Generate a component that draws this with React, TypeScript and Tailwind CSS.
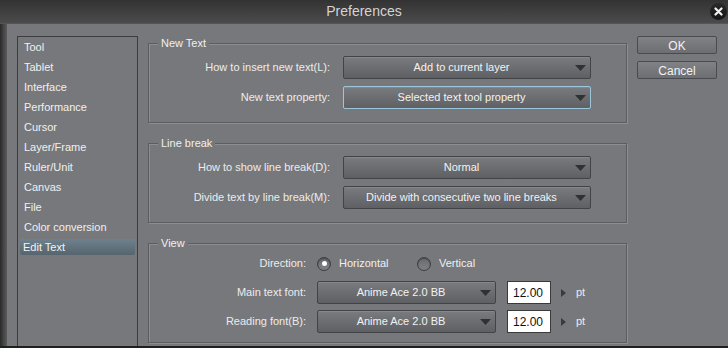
import React from "react";

const categories = [
  "Tool",
  "Tablet",
  "Interface",
  "Performance",
  "Cursor",
  "Layer/Frame",
  "Ruler/Unit",
  "Canvas",
  "File",
  "Color conversion",
  "Edit Text",
];

function Dropdown({ value, width, focused }: { value: string; width: string; focused?: boolean }) {
  return (
    <div
      className={`${width} h-[23px] flex items-center rounded-[2px] border ${
        focused ? "border-[#9cc6dc]" : "border-[#424346]"
      } bg-gradient-to-b from-[#7a7b7e] to-[#5f6063] shadow-[inset_0_1px_0_#86878a]`}
    >
      <span className="flex-1 text-center text-[#f2f2f2] pl-[4px]">{value}</span>
      <svg width="11" height="6" viewBox="0 0 11 6" className="mr-[4px]">
        <path d="M0 0 H11 L5.5 6 Z" fill="#303133" />
      </svg>
    </div>
  );
}

function Group({ title, children, className }: { title: string; children: React.ReactNode; className?: string }) {
  return (
    <div
      className={`relative border border-[#5c5d60] shadow-[inset_1px_1px_0_#8d8e91,1px_1px_0_#8d8e91] ${className ?? ""}`}
    >
      <span className="absolute -top-[8px] left-[9px] px-[3px] bg-[#77787b] text-[#f0f0f0] leading-[14px]">
        {title}
      </span>
      {children}
    </div>
  );
}

function Radio({ checked, label, className }: { checked?: boolean; label: string; className?: string }) {
  return (
    <div className={`flex items-center gap-[8px] ${className ?? ""}`}>
      <div className="w-[14px] h-[14px] rounded-full border border-[#3c3d40] bg-gradient-to-b from-[#6a6b6e] to-[#7f8083] flex items-center justify-center shadow-[inset_0_1px_1px_#4a4b4e]">
        {checked && <div className="w-[5px] h-[5px] rounded-full bg-white" />}
      </div>
      <span className="text-[#f0f0f0]">{label}</span>
    </div>
  );
}

function SizeField() {
  return (
    <>
      <div className="ml-[11px] w-[44px] h-[23px] bg-white border border-[#3a3a3a] flex items-center pl-[5px] text-[#111] text-[12px]">
        12.00
      </div>
      <svg width="5" height="8" viewBox="0 0 5 8" className="ml-[10px]">
        <path d="M0 0 L5 4 L0 8 Z" fill="#3a3b3e" />
      </svg>
      <span className="ml-[10px]">pt</span>
    </>
  );
}

export default function App() {
  return (
    <div
      className="w-[728px] h-[348px] overflow-hidden flex flex-col bg-[#77787b] text-[11px]"
      style={{ fontFamily: '"Liberation Sans", Arial, sans-serif' }}
    >
      {/* TITLE BAR */}
      <div className="h-[24px] flex items-center bg-gradient-to-b from-[#333333] to-[#4b4b4b] border-b border-[#555]">
        <div className="w-[32px]" />
        <div className="flex-1 text-center text-[#d4d4d4] text-[14px]">Preferences</div>
        <div className="w-[32px] flex justify-end pr-[1px]">
          <div className="w-[17px] h-[17px] rounded-full bg-gradient-to-b from-[#2a2a2a] to-[#151515] flex items-center justify-center">
            <svg width="9" height="9" viewBox="0 0 9 9">
              <path d="M1.5 1.5 L7.5 7.5 M7.5 1.5 L1.5 7.5" stroke="#f2f2f2" strokeWidth="2.2" strokeLinecap="round" />
            </svg>
          </div>
        </div>
      </div>

      {/* BODY */}
      <div className="flex-1 flex min-h-0">
        <div className="w-[7px] bg-gradient-to-r from-[#2a2a2a] via-[#444] to-[#5b5b5b]" />

        {/* CATEGORY LIST */}
        <div className="ml-[10px] mt-[12px] w-[121px] border-t border-x border-[#3c3d40] flex flex-col">
          {categories.map((c) => (
            <div key={c} className="h-[20px] flex items-center px-[2px]">
              {c === "Edit Text" ? (
                <div className="w-full h-[16px] flex items-center pl-[3px] rounded-[2px] bg-gradient-to-b from-[#6e818c] to-[#56656e] text-[#f4f4f4]">
                  {c}
                </div>
              ) : (
                <span className="pl-[4px] text-[#f0f0f0]">{c}</span>
              )}
            </div>
          ))}
        </div>

        {/* SETTINGS */}
        <div className="ml-[10px] w-[479px] pt-[19px] flex flex-col gap-[20px] text-[#ececec]">
          <Group title="New Text" className="h-[80px] pt-[12px]">
            <div className="grid grid-cols-[181px_248px] gap-x-[13px] gap-y-[7px] items-center">
              <span className="text-right">How to insert new text(L):</span>
              <Dropdown value="Add to current layer" width="w-[248px]" />
              <span className="text-right">New text property:</span>
              <Dropdown value="Selected text tool property" width="w-[248px]" focused />
            </div>
          </Group>

          <Group title="Line break" className="h-[80px] pt-[12px]">
            <div className="grid grid-cols-[181px_248px] gap-x-[13px] gap-y-[7px] items-center">
              <span className="text-right">How to show line break(D):</span>
              <Dropdown value="Normal" width="w-[248px]" />
              <span className="text-right">Divide text by line break(M):</span>
              <Dropdown value="Divide with consecutive two line breaks" width="w-[248px]" />
            </div>
          </Group>

          <Group title="View" className="h-[100px] pt-[8px]">
            <div className="grid grid-cols-[157px_auto] gap-x-[11px] gap-y-[6px] items-center">
              <span className="text-right">Direction:</span>
              <div className="h-[23px] flex items-center">
                <Radio checked label="Horizontal" className="w-[100px]" />
                <Radio label="Vertical" />
              </div>
              <span className="text-right">Main text font:</span>
              <div className="flex items-center">
                <Dropdown value="Anime Ace 2.0 BB" width="w-[179px]" />
                <SizeField />
              </div>
              <span className="text-right">Reading font(B):</span>
              <div className="flex items-center">
                <Dropdown value="Anime Ace 2.0 BB" width="w-[179px]" />
                <SizeField />
              </div>
            </div>
          </Group>
        </div>

        {/* BUTTONS */}
        <div className="ml-[10px] mt-[12px] w-[80px] flex flex-col gap-[7px]">
          <button className="h-[18px] rounded-[2px] border border-[#4a4b4e] bg-gradient-to-b from-[#818285] to-[#6d6e71] text-[#f2f2f2] text-[12px]">
            OK
          </button>
          <button className="h-[18px] rounded-[2px] border border-[#4a4b4e] bg-gradient-to-b from-[#818285] to-[#6d6e71] text-[#f2f2f2] text-[12px]">
            Cancel
          </button>
        </div>
      </div>

      <div className="h-[2px] bg-[#1f1f1f]" />
    </div>
  );
}
